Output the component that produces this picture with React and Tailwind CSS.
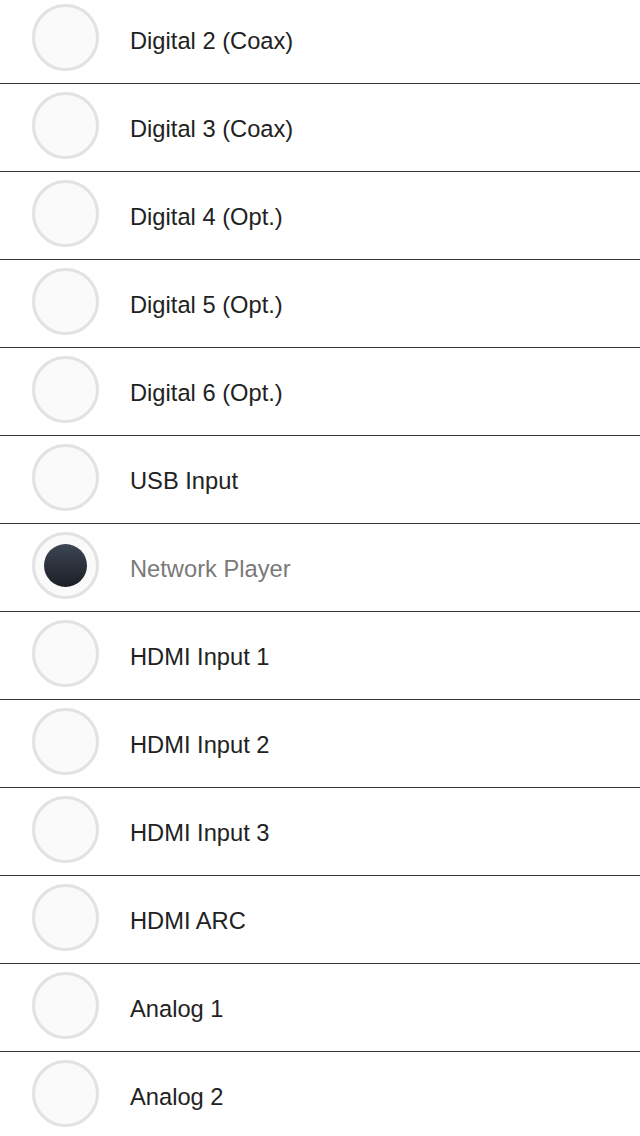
import React from "react";

const items = [
  "Digital 2 (Coax)",
  "Digital 3 (Coax)",
  "Digital 4 (Opt.)",
  "Digital 5 (Opt.)",
  "Digital 6 (Opt.)",
  "USB Input",
  "Network Player",
  "HDMI Input 1",
  "HDMI Input 2",
  "HDMI Input 3",
  "HDMI ARC",
  "Analog 1",
  "Analog 2",
];

export default function App() {
  return (
    <div className="w-[640px] h-[1136px] overflow-hidden bg-white" style={{ fontFamily: '"Liberation Sans", Arial, sans-serif' }}>
      <div className="-mt-[4px]">
        {items.map((name) => {
          const selected = name === "Network Player";
          return (
            <div key={name} className="flex items-center h-[88px] border-b border-[#383838]">
              <div className="ml-[32px] mb-[4px] w-[67px] h-[67px] rounded-full border-[3px] border-[#e2e2e2] bg-[#fafafa] flex items-center justify-center shrink-0">
                {selected && (
                  <div className="w-[43px] h-[43px] rounded-full bg-gradient-to-b from-[#3d4554] to-[#1c1f26]" />
                )}
              </div>
              <span className={`ml-[31px] mt-[4px] text-[23.7px] leading-none ${selected ? "text-[#7a7a7a]" : "text-[#222222]"}`}>
                {name}
              </span>
            </div>
          );
        })}
      </div>
    </div>
  );
}
